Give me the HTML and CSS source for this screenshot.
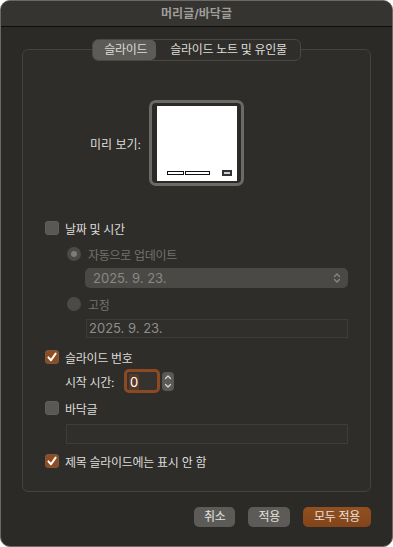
FILE: index.html
```html
<!DOCTYPE html>
<html>
<head>
    <title>머리글/바닥글</title>
    <link rel="stylesheet" href="styles.css">
</head>
<body>
    <div class="window">
        <div class="titlebar">머리글/바닥글</div>

        <div class="group">
            <div class="tabs">
                <div class="tab tab-on">슬라이드</div>
                <div class="tab">슬라이드 노트 및 유인물</div>
            </div>

            <div class="preview-row">
                <div class="preview-label">미리 보기:</div>
                <div class="preview-frame">
                    <div class="slide">
                        <span class="ph ph-date"></span>
                        <span class="ph ph-foot"></span>
                        <span class="ph ph-num"></span>
                    </div>
                </div>
            </div>

            <div class="check-row row-date">
                <span class="box"></span>
                <span>날짜 및 시간</span>
            </div>

            <div class="radio-row row-auto">
                <span class="radio radio-on"></span>
                <span>자동으로 업데이트</span>
            </div>
            <div class="popup">
                <span>2025. 9. 23.</span>
                <svg width="8" height="12" viewBox="0 0 8 12">
                    <path d="M1.5 4.5 L4 2 L6.5 4.5 M1.5 7.5 L4 10 L6.5 7.5" fill="none" stroke="#8a8884" stroke-width="1.3" stroke-linecap="round" stroke-linejoin="round"/>
                </svg>
            </div>

            <div class="radio-row row-fixed">
                <span class="radio"></span>
                <span>고정</span>
            </div>
            <div class="field field-date">2025. 9. 23.</div>

            <div class="check-row row-num">
                <span class="box box-on">
                    <svg width="14" height="14" viewBox="0 0 14 14">
                        <path d="M3.4 7.4 L6 10.2 L10.6 3.6" fill="none" stroke="#fff" stroke-width="2" stroke-linecap="round" stroke-linejoin="round"/>
                    </svg>
                </span>
                <span>슬라이드 번호</span>
            </div>

            <div class="start-row">
                <span>시작 시간:</span>
                <div class="num-field"><span class="sel">0</span></div>
                <div class="stepper">
                    <svg width="12" height="19" viewBox="0 0 12 19">
                        <path d="M3.5 6.5 L6 4 L8.5 6.5 M3.5 12.5 L6 15 L8.5 12.5" fill="none" stroke="#d8d7d4" stroke-width="1.3" stroke-linecap="round" stroke-linejoin="round"/>
                    </svg>
                </div>
            </div>

            <div class="check-row row-footer">
                <span class="box"></span>
                <span>바닥글</span>
            </div>
            <div class="field field-footer"></div>

            <div class="check-row row-title">
                <span class="box box-on">
                    <svg width="14" height="14" viewBox="0 0 14 14">
                        <path d="M3.4 7.4 L6 10.2 L10.6 3.6" fill="none" stroke="#fff" stroke-width="2" stroke-linecap="round" stroke-linejoin="round"/>
                    </svg>
                </span>
                <span>제목 슬라이드에는 표시 안 함</span>
            </div>
        </div>

        <div class="buttons">
            <div class="btn">취소</div>
            <div class="btn">적용</div>
            <div class="btn btn-main">모두 적용</div>
        </div>
    </div>
</body>
</html>
```

FILE: styles.css
```css
html, body {
    margin: 0;
    background: #ffffff;
}
body {
    font-family: "Inter", "Noto Sans CJK KR", sans-serif;
    font-size: 12px;
    color: #dddcd9;
}
.window {
    box-sizing: border-box;
    width: 393px;
    height: 547px;
    border: 1px solid #6a6966;
    border-radius: 10px;
    background: #2b2a27;
    overflow: hidden;
}
.titlebar {
    height: 25px;
    line-height: 25px;
    text-align: center;
    background: #353431;
    border-bottom: 1px solid #0d0d0c;
    color: #9f9d9a;
    font-weight: bold;
    font-size: 12px;
}

.group {
    margin: 22px 21px 0 21px;
    padding: 0 22px 22px 22px;
    border: 1px solid #44433f;
    border-radius: 6px;
    background: #2e2d2a;
    display: flex;
    flex-direction: column;
}
.tabs {
    align-self: center;
    margin-top: -11px;
    display: flex;
    height: 20px;
    border: 1px solid #4a4945;
    border-radius: 6px;
    background: #2f2e2b;
}
.tab {
    line-height: 20px;
    padding: 0 13px 0 14px;
    border-radius: 5px;
    letter-spacing: -0.3px;
}
.tab-on {
    background: #5c5b57;
    padding: 0 9px 0 11px;
}

.preview-row {
    margin-top: 39px;
    margin-left: -22px;
    margin-right: -22px;
    display: grid;
    grid-template-columns: 1fr auto 1fr;
    align-items: center;
}
.preview-label {
    text-align: right;
    padding-right: 8px;
}
.preview-frame {
    box-sizing: border-box;
    width: 95px;
    height: 86px;
    border: 3px solid #6b6a67;
    border-radius: 7px;
    padding: 3px 4px 2px 5px;
    background: #2b2a27;
}
.slide {
    height: 100%;
    background: #ffffff;
    display: flex;
    align-items: flex-end;
    padding: 0 5px 6px 10px;
    box-sizing: border-box;
}
.ph {
    box-sizing: border-box;
    height: 4px;
    border: 1px solid #111;
}
.ph-date { width: 17px; }
.ph-foot { width: 25px; margin-left: 1px; }
.ph-num {
    width: 10px;
    height: 6px;
    margin-left: auto;
    margin-bottom: -1px;
    border: 2px solid #333;
    background: #cfcfcf;
}

.check-row, .radio-row {
    display: flex;
    align-items: center;
    height: 16px;
    gap: 6px;
    letter-spacing: -0.3px;
}
.box {
    width: 14px;
    height: 14px;
    border-radius: 4px;
    background: #595855;
    box-shadow: inset 0 0 0 0.5px #666;
    display: flex;
}
.box-on {
    background: #8e4c20;
}
.radio {
    box-sizing: border-box;
    width: 14px;
    height: 14px;
    border-radius: 50%;
    background: #4b4a47;
}
.radio-on {
    border: 4px solid #4b4a47;
    background: #7d7c78;
}
.row-date { margin-top: 34px; }
.row-auto, .row-fixed {
    margin-left: 22px;
    color: #74726e;
    gap: 7px;
}
.row-auto { margin-top: 10px; }
.row-fixed { margin-top: 8px; }

.popup {
    margin: 6px 0 0 40px;
    height: 20px;
    border-radius: 5px;
    background: #4a4946;
    color: #8a8884;
    font-size: 13px;
    display: flex;
    align-items: center;
    justify-content: space-between;
    padding: 0 7px 0 8px;
}
.field {
    box-sizing: border-box;
    border: 1px solid #3e3d3a;
    background: #302f2c;
}
.field-date {
    margin: 7px 0 0 41px;
    height: 19px;
    line-height: 17px;
    padding-left: 2px;
    color: #8f8d89;
    font-size: 13px;
}
.row-num { margin-top: 11px; }

.start-row {
    margin-top: 4px;
    margin-left: 20px;
    display: flex;
    align-items: center;
    height: 24px;
}
.start-row > span {
    width: 59px;
    letter-spacing: -0.3px;
}
.num-field {
    box-sizing: border-box;
    width: 36px;
    height: 24px;
    border: 3px solid #8b4a22;
    border-radius: 5px;
    background: #34332f;
    padding: 2px 0 0 2px;
}
.sel {
    display: inline-block;
    height: 16px;
    line-height: 16px;
    padding: 0 1px;
    background: #5a3a26;
    color: #ffffff;
    font-size: 13px;
}
.stepper {
    margin-left: 2px;
    width: 12px;
    height: 19px;
    border-radius: 4px;
    background: #5a5955;
    display: flex;
}

.row-footer { margin-top: 7px; }
.field-footer {
    margin: 8px 0 0 21px;
    height: 20px;
}
.row-title { margin-top: 9px; }

.buttons {
    margin: 15px 21px 0 0;
    display: flex;
    justify-content: flex-end;
    gap: 13px;
}
.btn {
    height: 20px;
    line-height: 20px;
    padding: 0 10px;
    border-radius: 5px;
    background: #5c5b57;
    color: #e2e1de;
    text-align: center;
    letter-spacing: -0.3px;
}
.btn-main {
    background: linear-gradient(#92501f, #83441a);
    padding: 0 11px;
}
```
